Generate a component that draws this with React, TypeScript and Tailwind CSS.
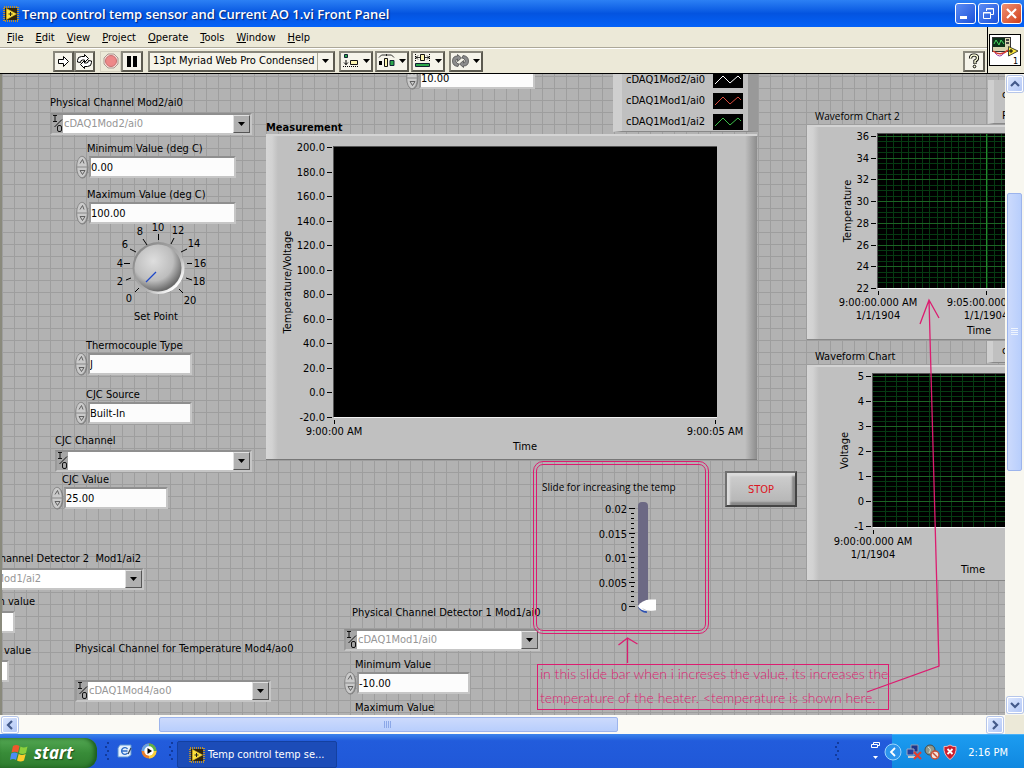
import { useState } from 'react';
import type { ReactNode } from 'react';

type ChartProps = {
  title: string;
  className: string;
  width: number;
  height: number;
  plot: { x: number; y: number; w: number; h: number };
  yLabels: string[];
  yStart: number;
  yStep: number;
  yMinor?: number;
  yTitle: string;
  yTitleX: number;
  xTicks: { x: number; lines: string[] }[];
  xTitleX: number;
  xTitleY: number;
  xMinor?: number;
  xMajor?: number;
};

function range(n: number) {
  return Array.from({ length: n }, (_, i) => i);
}

function Chart(props: ChartProps) {
  const { title, className, width, height, plot, yLabels, yStart, yStep, xTicks, xMinor, yMinor, xMajor } = props;
  const bottom = plot.y + plot.h;
  const middle = plot.y + plot.h / 2;
  return (
    <div className={`absolute ${className}`}>
      <div className="absolute inset-y-0 left-0 w-3 bg-linear-to-r from-[#d6d6d6] via-[#d2d2d2] to-[#c0c0c0]" />
      <div className="absolute inset-y-0 right-0 w-3 bg-linear-to-r from-[#c0c0c0] to-[#8c8c8c]" />
      <svg width={width} height={height} className="relative block text-[11px]" role="img" aria-label={title}>
        <rect x={plot.x - 1} y={plot.y - 1} width={plot.w + 1} height={plot.h + 1} fill="#555" />
        <rect x={plot.x} y={plot.y} width={plot.w} height={plot.h} fill="#000" />
        {xMinor &&
          range(Math.floor(plot.w / xMinor)).map((i) => (
            <rect key={i} x={Math.round(plot.x + 1 + (i + 1) * xMinor)} y={plot.y} width={1} height={plot.h} fill="#063a12" />
          ))}
        {yMinor &&
          range((yLabels.length - 1) * yMinor).map((i) => (
            <rect
              key={i}
              x={plot.x}
              y={Math.round(yStart + (i * yStep) / yMinor)}
              width={plot.w}
              height={1}
              fill={i % yMinor === 0 ? '#1c6424' : '#063a12'}
            />
          ))}
        {xMajor && <rect x={xMajor} y={plot.y} width={1} height={plot.h} fill="#238a2c" />}
        <rect x={plot.x} y={bottom} width={plot.w} height={1} fill="#f4f4f4" />
        {yLabels.map((label, i) => {
          const y = Math.round(yStart + i * yStep);
          return (
            <g key={label}>
              <text x={plot.x - 9} y={y + 4} textAnchor="end">
                {label}
              </text>
              <rect x={plot.x - 7} y={y} width={5} height={1} />
            </g>
          );
        })}
        <text textAnchor="middle" transform={`translate(${props.yTitleX} ${middle}) rotate(-90)`}>
          {props.yTitle}
        </text>
        {xTicks.map((tick) => (
          <g key={tick.x}>
            <rect x={tick.x} y={bottom + 3} width={1} height={4} />
            {tick.lines.map((line, i) => (
              <text key={line} x={tick.x} y={bottom + 18 + i * 13} textAnchor="middle">
                {line}
              </text>
            ))}
          </g>
        ))}
        <text x={props.xTitleX} y={props.xTitleY} textAnchor="middle">
          Time
        </text>
      </svg>
    </div>
  );
}

const sunken = 'border-2 border-t-[#8f8f8f] border-l-[#9a9a9a] border-b-[#c6c6c6] border-r-[#c6c6c6]';

type NumericProps = {
  id: string;
  label: string;
  value: string;
  className: string;
  boxClass: string;
};

function NumericControl({ id, label, value, className, boxClass }: NumericProps) {
  const [text, setText] = useState(value);
  return (
    <div className={`absolute ${className}`}>
      <label htmlFor={id} className="block ml-[11px] h-[14px] leading-4 whitespace-nowrap">
        {label}
      </label>
      <div className="flex items-center">
        <svg width="13" height="24" viewBox="0 0 13 24" aria-hidden="true">
          <ellipse cx="6.5" cy="12.5" rx="6" ry="11" fill="#808080" />
          <ellipse cx="6" cy="12" rx="5.3" ry="10.8" fill="#cacaca" stroke="#808080" strokeWidth=".8" />
          <path d="M1 12h10" stroke="#888" />
          <path d="M4 8.500 6.500 4.500 8 8.500M4 15.500h5l-2.500 4z" fill="none" stroke="#555" strokeWidth=".9" />
        </svg>
        <input
          id={id}
          value={text}
          onChange={(e) => setText(e.target.value)}
          className={`h-[22px] bg-[#fcfcfc] outline-none ${sunken} ${boxClass}`}
        />
      </div>
    </div>
  );
}

type ChannelProps = {
  id: string;
  label: string;
  value: string;
  className: string;
  labelClass: string;
};

function ChannelControl({ id, label, value, className, labelClass }: ChannelProps) {
  return (
    <div className={`absolute flex flex-col ${className}`}>
      <label htmlFor={id} className={`whitespace-nowrap h-[14px] leading-4 ${labelClass}`}>
        {label}
      </label>
      <div className={`flex h-[22px] bg-[#a6a6a6] ${sunken}`}>
        <svg width="11" height="18" viewBox="0 0 11 18" fill="none" stroke="#000" aria-hidden="true">
          <path d="M1 .5h4M3 .5v6M1 6.500h4M10 4.500 2.500 12" strokeWidth=".9" />
          <rect x="5.500" y="10.500" width="4" height="6" rx="1.500" strokeWidth=".9" />
        </svg>
        <select id={id} className="flex-1 min-w-0 appearance-none bg-white pl-px text-[#969696] outline-none">
          <option>{value}</option>
        </select>
        <span className="flex w-[17px] items-center justify-center bg-[#b0b0b0] border border-t-[#e0e0e0] border-l-[#e0e0e0] border-b-[#555] border-r-[#555]">
          <svg width="7" height="4" aria-hidden="true">
            <path d="M0 0h7L3.500 4z" />
          </svg>
        </span>
      </div>
    </div>
  );
}

// Scale positions around the dial, relative to its 100x88 drawing
const dialMarks = [
  { n: 0, x: 18, y: 81, tick: 'M24 71l4-4' },
  { n: 2, x: 9, y: 64, tick: 'M15 59l5-2' },
  { n: 4, x: 9, y: 46, tick: 'M13 42.500h6' },
  { n: 6, x: 14, y: 27, tick: 'M19 28l6 3' },
  { n: 8, x: 29, y: 14, tick: 'M32 18l4 6' },
  { n: 10, x: 47, y: 10, tick: 'M47.500 13v6' },
  { n: 12, x: 67, y: 13, tick: 'M63 17l-3 6' },
  { n: 14, x: 83, y: 26, tick: 'M76 28l-6 3' },
  { n: 16, x: 89, y: 46, tick: 'M76 42.500h5' },
  { n: 18, x: 88, y: 64, tick: 'M75 57l6 2' },
  { n: 20, x: 79, y: 83, tick: 'M68 68l4 4' },
];

function SetPointKnob() {
  const [value, setValue] = useState(0);
  return (
    <div className="absolute left-[109px] top-[147px] flex flex-col items-center">
      <div className="relative">
        <svg width="100" height="88" className="block text-[11px]" aria-hidden="true">
          <defs>
            <radialGradient id="knob" cx=".4" cy=".35" r=".65">
              <stop offset="0" stopColor="#dedede" />
              <stop offset=".65" stopColor="#bdbdbd" />
              <stop offset="1" stopColor="#6a6a6a" />
            </radialGradient>
            <linearGradient id="rim" x1="0" y1="0" x2="1" y2="1">
              <stop offset=".1" stopColor="#858585" />
              <stop offset=".6" stopColor="#b3b3b3" />
              <stop offset=".85" stopColor="#fff" />
            </linearGradient>
          </defs>
          <circle cx="47.500" cy="47" r="26" fill="url(#rim)" />
          <circle cx="47" cy="47" r="23.500" fill="url(#knob)" />
          <path d="M35 61l10-10" stroke="#1e48c8" strokeWidth="1.300" />
          {dialMarks.map((m) => (
            <g key={m.n}>
              <text x={m.x} y={m.y} textAnchor="middle">
                {m.n}
              </text>
              <path d={m.tick} stroke="#000" />
            </g>
          ))}
        </svg>
        <input
          id="set-point"
          type="range"
          min={0}
          max={20}
          value={value}
          onChange={(e) => setValue(Number(e.target.value))}
          className="absolute inset-0 h-full w-full opacity-0"
        />
      </div>
      <label htmlFor="set-point" className="mr-2.5 leading-4">
        Set Point
      </label>
    </div>
  );
}

function HeaterSlide() {
  const [value, setValue] = useState(0);
  const labels = ['0.02', '0.015', '0.01', '0.005', '0'];
  return (
    <div className="absolute left-[531px] top-[387px] h-[173px] w-[176px] rounded-[10px] border-4 border-double border-[#dc1c70] pl-[5px] pt-[15px]">
      <label htmlFor="heater" className="block whitespace-nowrap font-['Open_Sans','Noto_Sans',sans-serif] text-[10px]">
        Slide for increasing the temp
      </label>
      <div className="relative ml-12 mt-[5px] w-[68px]">
        <svg width="68" height="120" className="block text-[11px]" aria-hidden="true">
          {labels.map((l, i) => (
            <g key={l}>
              <text x="37" y={Math.round(14 + i * 24.5)} textAnchor="end">
                {l}
              </text>
              <rect x="39" y={Math.round(9 + i * 24.5)} width="6" height="1" />
            </g>
          ))}
          {range(20).map((i) => (
            <rect key={i} x="41" y={Math.round(9 + i * 4.9)} width="3" height="1" />
          ))}
          <rect x="48" y="3" width="10" height="108" rx="4" fill="#6c6984" />
          <path d="M48 107q2 7 9 7l-1-6z" fill="#2c50b0" />
          <path d="M48 107q4-6 12-6.500h6V112h-8q-8 0-10-5z" fill="#fff" />
          <path d="M52 109q6 4 14 2v1h-8q-4 0-6-3z" fill="#c8c8c8" />
        </svg>
        <input
          id="heater"
          type="range"
          min={0}
          max={20}
          value={value}
          onChange={(e) => setValue(Number(e.target.value))}
          className="absolute inset-0 h-full w-full opacity-0"
        />
      </div>
    </div>
  );
}

const legendRows = [
  { name: 'cDAQ1Mod2/ai0', color: '#ffffff' },
  { name: 'cDAQ1Mod1/ai0', color: '#d84a3c' },
  { name: 'cDAQ1Mod1/ai2', color: '#3cc04a' },
];

function PlotLegend() {
  return (
    <div className="absolute left-[611px] top-[-9px] flex h-[67px] w-[145px] flex-col gap-[5px] border-b border-r-[10px] border-l-[9px] border-b-[#888] border-l-[#cfcfcf] border-r-[#999] bg-[#c0c0c0] pl-1 pt-[7px]">
      {legendRows.map((row) => (
        <div key={row.name} className="flex h-4 items-center justify-between pr-[5px]">
          <span>{row.name}</span>
          <svg width="30" height="16" className="bg-black" aria-hidden="true">
            <path d="M2 12 10 4l7 7 8-7 3 3" fill="none" stroke={row.color} />
          </svg>
        </div>
      ))}
    </div>
  );
}

function FrontPanel() {
  return (
    <main className="relative min-w-0 flex-1 overflow-hidden border-l-2 border-[#8a8a7c] bg-[#b2b2b2] bg-[linear-gradient(#9e9e9e_1px,transparent_1px),linear-gradient(90deg,#9e9e9e_1px,transparent_1px)] bg-size-[12px_12px] bg-position-[0_2px]">
      <ChannelControl id="ch2" label="Physical Channel Mod2/ai0" value="cDAQ1Mod2/ai0" className="left-[48px] top-[21px] w-[202px] gap-1" labelClass="" />
      <NumericControl id="min-c" label="Minimum Value (deg C)" value="0.00" className="left-[74px] top-[67px]" boxClass="w-[147px]" />
      <NumericControl id="max-c" label="Maximum Value (deg C)" value="100.00" className="left-[74px] top-[113px]" boxClass="w-[147px]" />
      <SetPointKnob />
      <NumericControl id="tc-type" label="Thermocouple Type" value="J" className="left-[73px] top-[264px]" boxClass="w-[104px]" />
      <NumericControl id="cjc-src" label="CJC Source" value="Built-In" className="left-[73px] top-[313px]" boxClass="w-[104px]" />
      <ChannelControl id="cjc-ch" label="CJC Channel" value="" className="left-[53px] top-[359px] w-[197px] gap-[3px]" labelClass="" />
      <NumericControl id="cjc-val" label="CJC Value" value="25.00" className="left-[49px] top-[398px]" boxClass="w-[104px]" />

      <ChannelControl id="det2" label="Physical Channel Detector 2  Mod1/ai2" value="cDAQ1Mod1/ai2" className="left-[-54px] top-[477px] w-[196px] gap-[3px]" labelClass="self-end pr-[3px] whitespace-pre" />
      <div className="absolute left-[-92px] top-[520px] w-[125px] text-right">
        <label htmlFor="det2-min" className="block h-[17px] leading-4 whitespace-nowrap">Minimum value</label>
        <input id="det2-min" defaultValue="" className={`mr-5 h-[22px] w-[100px] bg-white ${sunken}`} />
      </div>
      <div className="absolute left-[-96px] top-[569px] w-[125px] text-right">
        <label htmlFor="det2-max" className="block h-[17px] leading-4 whitespace-nowrap">Maximum value</label>
        <input id="det2-max" defaultValue="" className={`mr-[22px] h-[22px] w-[100px] bg-white ${sunken}`} />
      </div>
      <ChannelControl id="ch4" label="Physical Channel for Temperature Mod4/ao0" value="cDAQ1Mod4/ao0" className="left-[73px] top-[567px] w-[196px] gap-[25px]" labelClass="" />
      <ChannelControl id="det1" label="Physical Channel Detector 1 Mod1/ai0" value="cDAQ1Mod1/ai0" className="left-[342px] top-[531px] w-[196px] gap-2.5" labelClass="ml-2" />
      <NumericControl id="det1-min" label="Minimum Value" value="-10.00" className="left-[342px] top-[583px]" boxClass="w-[113px]" />
      <NumericControl id="det1-max" label="Maximum Value" value="10.00" className="left-[342px] top-[626px]" boxClass="w-[113px]" />
      <NumericControl id="ch2-max" label="Maximum Value" value="10.00" className="left-[404px] top-[-22px]" boxClass="w-[116px]" />

      <PlotLegend />
      <h2 className="absolute left-[264px] top-[46px] font-bold leading-4">Measurement</h2>
      <Chart
        title="Measurement"
        className="left-[264px] top-[60px] border-t-2 border-b border-t-[#d4d4d4] border-b-[#777] bg-[#c0c0c0]"
        width={491}
        height={323}
        plot={{ x: 68, y: 11, w: 383, h: 270 }}
        yLabels={['200.0', '180.0', '160.0', '140.0', '120.0', '100.0', '80.0', '60.0', '40.0', '20.0', '0.0', '-20.0']}
        yStart={11}
        yStep={24.5}
        yTitle="Temperature/Voltage"
        yTitleX={25}
        xTicks={[
          { x: 68, lines: ['9:00:00 AM'] },
          { x: 449, lines: ['9:00:05 AM'] },
        ]}
        xTitleX={259}
        xTitleY={314}
      />

      <h2 className="absolute left-[813px] top-[35px] font-['Open_Sans','Noto_Sans',sans-serif] text-[10px]">Waveform Chart 2</h2>
      <div className="absolute left-[986px] top-[6px] h-[44px] w-[120px] border-l-[6px] border-b border-b-[#888] border-l-[#cfcfcf] bg-[#c0c0c0] pl-2 pt-1 leading-[21px]">
        <div>cDAQ1Mod1</div>
        <div>Plot 1</div>
      </div>
      <Chart
        title="Waveform Chart 2"
        className="left-[805px] top-[51px] border-t-2 border-b border-t-[#d4d4d4] border-b-[#888] bg-[#c0c0c0]"
        width={300}
        height={212}
        plot={{ x: 71, y: 7, w: 210, h: 154 }}
        yLabels={['36', '34', '32', '30', '28', '26', '24', '22']}
        yStart={9}
        yStep={21.7}
        yMinor={4}
        yTitle="Temperature"
        yTitleX={44}
        xTicks={[
          { x: 71, lines: ['9:00:00.000 AM', '1/1/1904'] },
          { x: 179, lines: ['9:05:00.000 AM', '1/1/1904'] },
        ]}
        xTitleX={172}
        xTitleY={207}
        xMinor={7.2}
        xMajor={179}
      />

      <h2 className="absolute left-[813px] top-[275px] leading-4">Waveform Chart</h2>
      <div className="absolute left-[985px] top-[267px] h-[22px] w-[120px] border-l-[6px] border-b border-b-[#888] border-l-[#cfcfcf] bg-[#c0c0c0] pl-[9px] pt-[3px]">
        cDAQ1Mod1
      </div>
      <Chart
        title="Waveform Chart"
        className="left-[805px] top-[291px] border-t-2 border-b border-t-[#d4d4d4] border-b-[#888] bg-[#c0c0c0]"
        width={300}
        height={213}
        plot={{ x: 66, y: 7, w: 210, h: 153 }}
        yLabels={['5', '4', '3', '2', '1', '0', '-1']}
        yStart={9}
        yStep={25}
        yMinor={5}
        yTitle="Voltage"
        yTitleX={41}
        xTicks={[{ x: 66, lines: ['9:00:00.000 AM', '1/1/1904'] }]}
        xTitleX={166}
        xTitleY={206}
        xMinor={11}
      />

      <HeaterSlide />
      <button className="absolute left-[723px] top-[397px] h-[36px] w-[72px] border-2 border-t-[#707070] border-l-[#707070] border-b-[#444] border-r-[#444] bg-linear-to-b from-[#cfcfcf] to-[#b4b4b4] pt-0.5 text-[#dc1420] shadow-[inset_3px_3px_2px_#dcdcdc,inset_-3px_-3px_2px_#888]">
        STOP
      </button>

      {/* Annotations */}
      <p className="absolute left-[535px] top-[590px] h-[46px] w-[352px] whitespace-nowrap border border-[#dc1c70] px-0.5 font-['Lato',sans-serif] text-[14px] font-light text-[#dc1c70]">
        <span className="block h-6 leading-[18px]">in this slide bar when i increses the value, its increases the</span>
        <span className="block leading-[18px]">temperature of the heater. &lt;temperature is shown here.</span>
      </p>
      <svg className="pointer-events-none absolute left-0 top-0" width="1003" height="640" fill="none" stroke="#dc1c70" strokeWidth="1.300" aria-hidden="true">
        <path d="M625.500 589v-25M616.500 571l9-7 10 6" />
        <path d="M865 618l72-26-10-366M918 250l9-24 10 18" />
      </svg>
    </main>
  );
}

function ScrollButton({ label, d }: { label: string; d: string }) {
  return (
    <button
      aria-label={label}
      className="flex h-4 w-4 shrink-0 items-center justify-center rounded-xs border border-white bg-linear-to-br from-[#dbe6fe] to-[#b4c8f6] shadow-[0_0_0_1px_#b6c6ea]"
    >
      <svg width="10" height="10" viewBox="0 0 10 10" fill="none" stroke="#43598a" strokeWidth="2.200">
        <path d={d} />
      </svg>
    </button>
  );
}

function ToolButton({ label, className, children }: { label: string; className: string; children: ReactNode }) {
  return (
    <button
      aria-label={label}
      className={`flex h-[21px] items-center justify-center gap-1 border-2 border-t-[#8a887c] border-l-[#8a887c] border-b-[#5c5a50] border-r-[#5c5a50] bg-[#f6f4ea] ${className}`}
    >
      {children}
    </button>
  );
}

function Caret() {
  return (
    <svg width="7" height="4" aria-hidden="true">
      <path d="M0 0h7L3.500 4z" />
    </svg>
  );
}

function ViIcon() {
  return (
    <svg width="16" height="16" viewBox="0 0 16 16" className="shrink-0" aria-hidden="true">
      <rect x="1" y="1" width="14" height="14" fill="none" stroke="#b89030" strokeWidth="2" strokeDasharray="1 1" />
      <rect x="2" y="2" width="12" height="12" fill="#30250c" />
      <path d="M3.500 2.500 13.500 8l-10 5.500z" fill="#fce23c" stroke="#d8b430" strokeWidth=".6" />
      <path d="M5.500 8h4M7.500 6v4" stroke="#222" />
    </svg>
  );
}

const menus = ['File', 'Edit', 'View', 'Project', 'Operate', 'Tools', 'Window', 'Help'];

function Toolbar() {
  return (
    <div className="flex h-[25px] items-center border-t border-white pl-[53px] pr-[2px]">
      <ToolButton label="Run" className="w-[21px]">
        <svg width="13" height="13" viewBox="0 0 13 13" fill="#fff" stroke="#000">
          <path d="M1.500 4.500h5V1.500l5 5-5 5v-3h-5z" />
        </svg>
      </ToolButton>
      <ToolButton label="Run Continuously" className="w-[21px]">
        <svg width="17" height="15" viewBox="0 0 17 15" fill="#fff" stroke="#000">
          <path d="M1.500 8V6.500q0-4 4-4h3V.5l4 4-4 4V6h-2q-2 0-2 2.500z" />
          <path d="M15.500 7v1.500q0 4-4 4h-3v2l-4-4 4-4V9h2q2 0 2-2.500z" />
        </svg>
      </ToolButton>
      <button aria-label="Abort Execution" className="ml-[5px] flex h-[21px] w-[21px] items-center justify-center border border-[#d4d0c0]">
        <svg width="16" height="16" viewBox="0 0 16 16">
          <path d="M5 1h6l4 4v6l-4 4H5l-4-4V5z" fill="#f8dcd8" stroke="#a89890" />
          <circle cx="8" cy="8" r="5.500" fill="#ee8888" stroke="#c87070" />
        </svg>
      </button>
      <ToolButton label="Pause" className="w-[22px]">
        <svg width="10" height="11">
          <path d="M0 0h4v11H0zM6 0h4v11H6z" />
        </svg>
      </ToolButton>
      <div className="ml-[5px] flex h-[21px] w-[187px] items-center border-2 border-t-[#8a887c] border-l-[#8a887c] border-b-[#5c5a50] border-r-[#5c5a50] bg-[#f6f4ea] pr-1">
        <select aria-label="Text Settings" className="h-full min-w-0 flex-1 appearance-none border-r border-[#aaa896] pl-[3px] outline-none">
          <option>13pt Myriad Web Pro Condensed</option>
        </select>
        <span className="pl-1">
          <Caret />
        </span>
      </div>
      <ToolButton label="Align Objects" className="ml-1 w-[34px]">
        <svg width="17" height="14" viewBox="0 0 17 14">
          <path d="M2.500.5h3v3h-3z" fill="#2ba84a" stroke="#123" />
          <path d="M8.500 6.500h7v4h-7z" fill="#fcf4b0" stroke="#111" />
          <path d="M4 6v5M2 8.500l2 2 2-2" fill="none" stroke="#000" />
          <path d="M1 12.500h15" stroke="#000" strokeDasharray="1 1" />
        </svg>
        <Caret />
      </ToolButton>
      <ToolButton label="Distribute Objects" className="ml-0.5 w-[34px]">
        <svg width="17" height="14" viewBox="0 0 17 14">
          <path d="M1 3.500 3.500 1h10L16 3.500M8.500 0v2" fill="none" stroke="#000" strokeWidth=".8" />
          <path d="M1 7h3v4H1z" />
          <path d="M6.500 4.500h3v8h-3z" fill="#fcf4b0" stroke="#111" />
          <path d="M12 6.500h4v5h-4z" fill="#2ba84a" stroke="#123" />
        </svg>
        <Caret />
      </ToolButton>
      <ToolButton label="Resize Objects" className="ml-0.5 w-[34px]">
        <svg width="17" height="14" viewBox="0 0 17 14">
          <path d="M6.500.5h4v6h-4z" fill="#fcf4b0" stroke="#111" />
          <path d="M1.500 0v8M15.500 0v8" stroke="#000" strokeDasharray="1 1" />
          <path d="M2 3.500h4M4 1.500l-2 2 2 2M15 3.500h-4M13 1.500l2 2-2 2" stroke="#000" fill="none" strokeWidth=".8" />
          <path d="M1.500 9.500h14v3h-14z" fill="#2ba84a" stroke="#123" />
        </svg>
        <Caret />
      </ToolButton>
      <ToolButton label="Reorder" className="ml-1 w-[34px]">
        <svg width="17" height="14" viewBox="0 0 17 14" fill="#8c8c8c" stroke="#444" strokeWidth=".7">
          <path d="M.5 7q0-5 5-5V.5l4 3.500-4 3.500V5Q3.500 5 4 7.500T7 10l-1 2.500Q.5 12 .5 7z" />
          <path d="M16.500 7q0 5-5 5v1.500L7.500 10l4-3.500V9q2 0 1.500-2.500T10 4l1-2.500q5.500.5 5.500 5.500z" />
        </svg>
        <Caret />
      </ToolButton>
      <ToolButton label="Context Help" className="ml-auto w-[22px]">
        <svg width="12" height="16" viewBox="0 0 12 16">
          <path d="M2.500 5.500q0-3.500 3.500-3.500t3.500 3Q9.500 7 7 8v3" fill="none" stroke="#000" strokeWidth="3.200" />
          <path d="M2.500 5.500q0-3.500 3.500-3.500t3.500 3Q9.500 7 7 8v2.500" fill="none" stroke="#fcfcd8" strokeWidth="1.500" />
          <circle cx="6.500" cy="13.500" r="1.300" fill="#fcfcd8" stroke="#000" />
        </svg>
      </ToolButton>
    </div>
  );
}

function TitleBar() {
  return (
    <header className="flex h-[27px] shrink-0 items-center bg-linear-to-b from-[#2c80f4] via-[#0454e0] to-[#0462f8] pl-[3px] pr-0.5">
      <ViIcon />
      <h1 className="ml-[3px] flex-1 whitespace-nowrap font-['Open_Sans','Noto_Sans',sans-serif] text-[13px] font-semibold text-white [text-shadow:1px_1px_1px_#0a2470]">
        Temp control temp sensor and Current AO 1.vi Front Panel
      </h1>
      <div className="flex gap-0.5">
        <button aria-label="Minimize" className="h-[21px] w-[21px] rounded-[3px] border border-white bg-linear-to-br from-[#5c8cf4] to-[#1c50d8]">
          <svg width="19" height="19">
            <path d="M4 12h7v3H4z" fill="#fff" />
          </svg>
        </button>
        <button aria-label="Restore" className="h-[21px] w-[21px] rounded-[3px] border border-white bg-linear-to-br from-[#5c8cf4] to-[#1c50d8]">
          <svg width="19" height="19" fill="none" stroke="#fff">
            <path d="M7.500 7V4.500h7v6H12M7 5h8" />
            <path d="M4.500 8.500h7v6h-7zM4 9h8" />
          </svg>
        </button>
        <button aria-label="Close" className="h-[21px] w-[21px] rounded-[3px] border border-white bg-linear-to-br from-[#f09070] to-[#d03c14]">
          <svg width="19" height="19" stroke="#fff" strokeWidth="2.200">
            <path d="M5 5l9 9M14 5l-9 9" />
          </svg>
        </button>
      </div>
    </header>
  );
}

function Grip() {
  return (
    <svg width="4" height="20" className="shrink-0" fill="#123a9c" aria-hidden="true">
      {range(5).map((i) => (
        <rect key={i} x={i % 2 ? 0 : 2} y={1 + i * 4} width="2" height="2" />
      ))}
    </svg>
  );
}

function Taskbar() {
  return (
    <footer className="flex h-[34px] shrink-0 items-center bg-linear-to-b from-[#3c84ec] via-[#225cdc] via-20% to-[#2058d8] text-white">
      <button className="flex h-[30px] w-[97px] items-center gap-1 self-end rounded-r-xl bg-linear-to-b from-[#54a854] via-[#388c38] to-[#2f7c2f] pl-2.5 shadow-[inset_-3px_0_4px_#1c5c1c]">
        <svg width="20" height="18" viewBox="0 0 20 18" aria-hidden="true">
          <path d="M3 2q3-2 6.500 0L8 8.500Q5 7 1.500 8.500z" fill="#f0582c" />
          <path d="M10.500 2.500q3 2 7 0L16 9q-3.500 2-7 0z" fill="#8cd03c" />
          <path d="M1.200 9.500q3.300-2 6.500 0L6 16q-3-2-6 0z" fill="#4c8cf4" />
          <path d="M8.700 10q3 2 7 0L14 16.500q-3.500 2-7 0z" fill="#fccc2c" />
        </svg>
        <span className="font-['Open_Sans','Noto_Sans',sans-serif] text-[17px] leading-5 font-bold italic [text-shadow:1px_1px_1px_#1c4c1c]">start</span>
      </button>
      <div className="ml-2 flex items-center gap-2">
        <Grip />
        <button aria-label="Show Desktop">
          <svg width="16" height="16" viewBox="0 0 16 16">
            <path d="M3 2h11v10l-3 2H1V5z" fill="#e4f0fc" stroke="#5c94d4" />
            <path d="M10.500 6a3.300 3.300 0 1 0 0 4M4.500 8h6" fill="none" stroke="#2c6cc8" strokeWidth="1.300" />
            <path d="M11 11l3-6" stroke="#345" strokeWidth="1.200" />
          </svg>
        </button>
        <button aria-label="Windows Media Player">
          <svg width="16" height="16" viewBox="0 0 16 16">
            <circle cx="8" cy="8" r="7.500" fill="#e8802c" />
            <path d="M8 .5A7.500 7.500 0 0 1 15.500 8H8z" fill="#5cb048" />
            <path d="M8 15.500A7.500 7.500 0 0 0 15.500 8H8z" fill="#f8d03c" />
            <path d="M.5 8A7.500 7.500 0 0 1 8 .5V8z" fill="#68a4e4" />
            <circle cx="8" cy="8" r="4.700" fill="#fff" />
            <path d="M6.500 5 11 8l-4.500 3z" />
          </svg>
        </button>
        <span className="ml-1">
          <Grip />
        </span>
      </div>
      <button className="ml-1 flex h-[27px] w-[160px] items-center gap-[3px] self-end rounded-xs border border-[#1440a0] bg-[#1c4cb8] pl-[11px] leading-4">
        <ViIcon />
        <span>Temp control temp se...</span>
      </button>
      <div className="ml-auto flex items-center self-stretch">
        <Grip />
        <button aria-label="Restore taskbar window" className="ml-8 mr-3 flex flex-col items-center">
          <svg width="9" height="20" fill="none" stroke="#fff" aria-hidden="true">
            <path d="M2.500 3V1.500h6v3H7M.5 3.500h6v3h-6z" />
            <path d="M2 15h5l-2.500 3z" fill="#fff" stroke="none" />
          </svg>
        </button>
        <div className="flex h-full items-center gap-0.5 border-t border-[#48b0f8] bg-linear-to-b from-[#1c9cf0] to-[#1088e0] pr-4">
          <button aria-label="Show hidden icons" className="-ml-2 mr-0.5">
            <svg width="18" height="18" viewBox="0 0 18 18">
              <circle cx="9" cy="9" r="8" fill="#2c94ec" stroke="#9cd4fc" />
              <path d="M11 5 7 9l4 4" fill="none" stroke="#fff" strokeWidth="1.800" />
            </svg>
          </button>
          <svg width="16" height="16" viewBox="0 0 16 16" role="img" aria-label="Network disconnected">
            <path d="M5 1h7v7H5z" fill="#1c3488" stroke="#9098b0" />
            <path d="M1 5h7v6H1z" fill="#24409c" stroke="#a0a8c0" />
            <path d="M2 13h7" stroke="#ccc" strokeWidth="2" />
            <path d="M8 8l7 7M15 8l-7 7" stroke="#e43c2c" strokeWidth="2.200" />
          </svg>
          <svg width="16" height="16" viewBox="0 0 16 16" role="img" aria-label="Device">
            <circle cx="6" cy="6" r="5" fill="#90988c" stroke="#484c48" />
            <path d="M4 3q4 2 1 6" fill="none" stroke="#e0e4d8" />
            <circle cx="11" cy="11" r="4" fill="#f4e0dc" stroke="#c84c34" strokeWidth="1.400" />
            <path d="M8.500 8.500l5 5" stroke="#c84c34" strokeWidth="1.400" />
          </svg>
          <svg width="16" height="16" viewBox="0 0 16 16" role="img" aria-label="Security alert">
            <path d="M8 1q3 2 6 1.500 1 8-6 13Q1 10.500 2 2.500 5 3 8 1z" fill="#cc1c2c" stroke="#f4b4b4" />
            <path d="M5.500 5l5 5M10.500 5l-5 5" stroke="#fff" strokeWidth="1.800" />
          </svg>
          <time className="ml-2 pt-0.5">2:16 PM</time>
        </div>
      </div>
    </footer>
  );
}

export default function App() {
  return (
    <div className="flex h-screen flex-col overflow-hidden bg-[#ece9d8] font-['DejaVu_Sans_Condensed','DejaVu_Sans',sans-serif] text-[11px] leading-[14px] text-black">
      <TitleBar />
      <div className="flex h-[47px] shrink-0 border-b border-black">
        <div className="min-w-0 flex-1">
          <nav className="flex h-[21px] items-center gap-3 border-b border-[#aca899] pl-[7px] pt-0.5">
            {menus.map((m) => (
              <button key={m}>
                <span className="underline">{m[0]}</span>
                {m.slice(1)}
              </button>
            ))}
          </nav>
          <Toolbar />
        </div>
        <div className="w-[37px] border-l border-black pl-px pt-[7px]">
          <svg width="32" height="32" viewBox="0 0 32 32" role="img" aria-label="VI icon">
            <rect x=".5" y=".5" width="31" height="31" fill="#fff" stroke="#000" />
            <rect x="3.500" y="3.500" width="18" height="14" fill="#d8d4b0" stroke="#333" />
            <path d="M4 4h12v9H4z" fill="#0c3018" />
            <path d="M5 10l2-4 3 5 2-5 3 4" fill="none" stroke="#48d860" />
            <path d="M17 6h3M17 9h3" stroke="#444" strokeWidth="2" />
            <path d="M4 17q8 6 15-1" fill="none" stroke="#d83c28" strokeWidth="1.500" />
            <path d="M6 19q5 6 9 0" fill="none" stroke="#a03ca0" />
            <path d="M19.500 12.500 29 17l-9.500 5z" fill="#fce83c" stroke="#443" />
            <path d="M20 17h4M22 15v4" stroke="#000" />
            <text x="24" y="30" className="text-[9px]">
              1
            </text>
          </svg>
        </div>
      </div>

      <div className="flex min-h-0 flex-1">
        <FrontPanel />
        <div className="flex w-[19px] flex-col items-center bg-[#f8f7f0] py-0.5">
          <ScrollButton label="Scroll up" d="M1 7l4-4 4 4" />
          <div className="flex w-full flex-1 flex-col items-center">
            <div className="flex-[101]" />
            <div className="flex w-[15px] flex-[277] items-center justify-center rounded-xs border border-[#9cb4ec] bg-linear-to-r from-[#ccdafc] to-[#b8cefc]">
              <svg width="7" height="8" stroke="#eef4fe" aria-hidden="true">
                <path d="M0 .5h7M0 2.500h7M0 4.500h7M0 6.500h7" />
              </svg>
            </div>
            <div className="flex-[227]" />
          </div>
          <ScrollButton label="Scroll down" d="M1 3l4 4 4-4" />
        </div>
      </div>
      <div className="flex h-[19px] shrink-0 pr-[19px]">
        <div className="flex flex-1 items-center bg-[#fbfaf5] px-0.5">
          <ScrollButton label="Scroll left" d="M7 1 3 5l4 4" />
          <div className="flex h-full flex-1 items-center">
            <div className="flex-[142]" />
            <div className="flex h-[15px] flex-[458] items-center justify-center rounded-xs border border-[#9cb4ec] bg-linear-to-b from-[#ccdafc] to-[#b8cefc]">
              <svg width="8" height="7" stroke="#8ca8e8" aria-hidden="true">
                <path d="M.5 0v7M2.500 0v7M4.500 0v7M6.500 0v7" />
              </svg>
            </div>
            <div className="flex-[371]" />
          </div>
          <ScrollButton label="Scroll right" d="M3 1l4 4-4 4" />
        </div>
      </div>
      <Taskbar />
    </div>
  );
}
